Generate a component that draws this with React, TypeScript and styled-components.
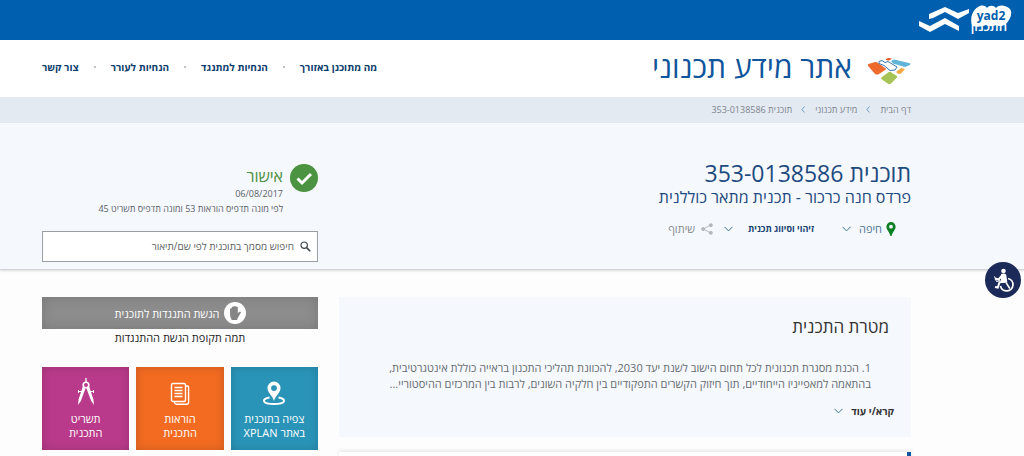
import React from "react";
import styled, { createGlobalStyle } from "styled-components";

const GlobalStyle = createGlobalStyle`
  *, *::before, *::after { box-sizing: border-box; }
  body {
    margin: 0;
    background: #fdfdfd;
    color: #333;
    font-family: "Open Sans", "Noto Sans", sans-serif;
    font-size: 11px;
  }
  h1, h2, h3, p, ul, ol { margin: 0; padding: 0; font-weight: 400; }
  ul, ol { list-style: none; }
  a { color: inherit; text-decoration: none; }
  button { font: inherit; color: inherit; border: 0; padding: 0; background: none; cursor: pointer; }
`;

const Page = styled.div`
  display: flex;
  flex-direction: column;
  min-height: 100vh;
`;

const gutter = "113px";
const gutterEnd = "42px";

const TopBar = styled.div`
  display: flex;
  align-items: center;
  height: 40px;
  padding-right: 12px;
  background: #005fae;
`;

const Header = styled.header`
  display: flex;
  align-items: center;
  justify-content: space-between;
  height: 57px;
  padding: 0 ${gutter} 3px ${gutterEnd};
  background: #fff;
`;

const Brand = styled.a`
  display: flex;
  align-items: flex-end;
  gap: 15px;
  color: #11559c;
  font-size: 30px;
  line-height: 36px;
`;

const NavList = styled.ul`
  display: flex;
  align-items: center;
  color: #0c3c6c;
  font-size: 10px;
  line-height: 16px;
  font-weight: 700;
`;

const NavItem = styled.li`
  display: flex;
  align-items: center;
  & + &::before {
    content: "";
    width: 2px;
    height: 2px;
    margin: 0 15px;
    border-radius: 50%;
    background: #a9b0b8;
  }
`;

const Crumbs = styled.ol`
  display: flex;
  align-items: center;
  gap: 10px;
  height: 26px;
  padding: 0 ${gutter} 2px ${gutterEnd};
  background: #e3eaf2;
  color: #7d858d;
  font-size: 9px;
`;

const Crumb = styled.li`
  display: flex;
  align-items: center;
  gap: 9px;
`;

const Hero = styled.section`
  display: flex;
  justify-content: space-between;
  align-items: flex-start;
  padding: 36px ${gutter} 7px ${gutterEnd};
  background: #f5f8fc;
  border-bottom: 1px solid #d0d4d8;
  box-shadow: 0 1px 2px rgba(0, 0, 0, 0.14);
`;

const PlanTitle = styled.h1`
  color: #1d4a80;
  font-size: 23px;
  line-height: 28px;
`;

const PlanSubtitle = styled.h2`
  color: #1d4a80;
  font-size: 16px;
  line-height: 20px;
`;

const Actions = styled.div`
  display: flex;
  align-items: center;
  padding: 14px 15px 0 0;
`;

const Action = styled.button<{ $tone: string; $size: number; $bold?: boolean; $gap: number; $after?: number }>`
  display: flex;
  align-items: center;
  gap: ${(p) => p.$gap}px;
  margin-left: ${(p) => p.$after ?? 0}px;
  color: ${(p) => p.$tone};
  font-size: ${(p) => p.$size}px;
  font-weight: ${(p) => (p.$bold ? 700 : 400)};
  line-height: 16px;
`;

const Label = styled.span`
  display: flex;
  align-items: center;
  gap: 4px;
`;

const Side = styled.div`
  width: 276px;
  flex: none;
`;

const Status = styled.div`
  display: flex;
  align-items: flex-start;
  gap: 7px;
  padding-top: 5px;
`;

const StatusName = styled.p`
  color: #4d8f43;
  font-size: 16px;
  line-height: 24px;
`;

const StatusLine = styled.p<{ $first?: boolean }>`
  color: #5b6167;
  font-size: 9px;
  line-height: ${(p) => (p.$first ? 12 : 18)}px;
`;

const Search = styled.label`
  display: flex;
  align-items: center;
  gap: 6px;
  height: 31px;
  margin-top: 13px;
  padding: 0 6px 1px;
  border: 1px solid #9a9ea2;
  background: #fff;
`;

const SearchInput = styled.input`
  flex: 1;
  min-width: 0;
  border: 0;
  padding: 0;
  outline: 0;
  background: none;
  font: 10px/16px "Open Sans", "Noto Sans", sans-serif;
  &::placeholder { color: #5c5f62; opacity: 1; }
`;

const Main = styled.main`
  display: flex;
  flex: 1;
  gap: 21px;
  padding: 27px ${gutter} 0 ${gutterEnd};
`;

const Column = styled.div`
  display: flex;
  flex: 1;
  min-width: 0;
  flex-direction: column;
  gap: 15px;
`;

const Card = styled.section`
  min-height: 140px;
  padding: 18px 17px 0 24px;
  background: #f5f8fc;
`;

const CardTitle = styled.h3`
  padding-right: 5px;
  font-size: 17px;
  line-height: 24px;
`;

const CardText = styled.p`
  padding: 21px 23px 0 0;
  color: #666c72;
  font-size: 11px;
  line-height: 16px;
`;

const Line = styled.span`
  display: block;
`;

const More = styled.button`
  display: flex;
  align-items: center;
  gap: 8px;
  margin-top: 10px;
  font-size: 10px;
  font-weight: 700;
  line-height: 18px;
`;

const NextCard = styled.section`
  flex: 1;
  border-right: 4px solid #11559c;
  background: #fff;
  box-shadow: 0 -1px 4px rgba(0, 0, 0, 0.12);
`;

const Objection = styled.button`
  display: flex;
  align-items: center;
  justify-content: center;
  gap: 4px;
  width: 100%;
  height: 32px;
  background: #8c8c8c;
  box-shadow: inset 0 0 12px rgba(0, 0, 0, 0.14);
  color: #fff;
`;

const Note = styled.p`
  color: #222;
  line-height: 18px;
  text-align: center;
`;

const Tiles = styled.div`
  display: grid;
  grid-template-columns: repeat(3, 1fr);
  gap: 7px;
  margin-top: 20px;
`;

const Tile = styled.a<{ $color: string }>`
  display: flex;
  flex-direction: column;
  align-items: center;
  height: 83px;
  padding-top: 9px;
  gap: 2px;
  background: ${(p) => p.$color};
  box-shadow: inset 0 0 10px rgba(0, 0, 0, 0.16);
  color: #fff;
  line-height: 14px;
  text-align: center;
`;

const Access = styled.button`
  position: fixed;
  top: 262px;
  right: 3px;
  width: 36px;
  height: 36px;
  border-radius: 50%;
  background: #1b2a58;
`;

const Chevron = ({ color = "#3f7396" }: { color?: string }) => (
  <svg width="9" height="6" viewBox="0 0 9 6" fill="none" stroke={color} aria-hidden="true">
    <path d="M.5 .8 4.5 4.9 8.5 .8" />
  </svg>
);

const CrumbArrow = () => (
  <svg width="4" height="7" viewBox="0 0 4 7" fill="none" stroke="#6e9cc0" aria-hidden="true">
    <path d="M3.6 .5 .8 3.5 3.6 6.5" />
  </svg>
);

const PartnerLogo = () => (
  <svg width="94" height="32" viewBox="918 4 94 32" aria-label="yad2">
    <g fill="#fff">
      <path d="M929 14 945 7 958 13 969 9V13L958 19 945 12 933 18 929 19Z" />
      <path d="M919 21 930 26 945 18 959 26V31L945 24 930 32 919 26Z" />
      <path d="M973 26C969 21 972 10 978 7 982 4 986 6 987 8 989 5 994 5 996 8 999 4 1006 5 1010 9 1013 13 1010 20 1006 24 1002 27 998 26 996 25 992 27 988 26 986 25 981 27 977 27 973 26Z" />
    </g>
    <text x="991" y="20" textAnchor="middle" fill="#005fae" fontFamily="Open Sans, sans-serif" fontSize="12" fontWeight="700" direction="ltr">yad2</text>
    <text x="989" y="31" textAnchor="middle" fill="#fff" fontFamily="Open Sans, sans-serif" fontSize="13" fontWeight="600">התכנון</text>
  </svg>
);

const SiteLogo = () => (
  <svg width="44" height="28" viewBox="0 0 44 28" aria-hidden="true">
    <path d="M1.5 7 8 5Q10 5 11 6L18 11Q20 12 18 13L12 17Q10 18 8 17L2 10Q0 8 1.5 7Z" fill="#ee6b2d" />
    <path d="M18.5 2.500Q20 0 25 1.500L23 3Q21 4 18.5 2.500Z" fill="#e2532a" />
    <path d="M24 4 27 2.500 42 6Q44 6 43 8L38 10 26 6.500Z" fill="#62b3d8" />
    <path d="M34 11 38 12 34 16.500Q32 18 29 15Z" fill="#f3a841" />
    <path d="M15 20 21 15.500Q23 14 25 16L30 19Q31 20 29 21.500L24 26.500Q22 28 20 26L15 22.500Q13 21 15 20Z" fill="#a6c455" />
    <path d="M12 4.500 15 3.500 18 5.500 21 4.500 30 10 28 13 23 13.500 17 8.500 12 6.500Z" fill="#fff" stroke="#3a76b5" strokeWidth="1" />
  </svg>
);

const PinIcon = () => (
  <svg width="10" height="14" viewBox="0 0 10 14" aria-hidden="true">
    <path fillRule="evenodd" d="M5 0A4.6 4.6 0 0 0 .4 4.7C.4 8 3.5 9.5 4.4 14H5.6C6.5 9.5 9.6 8 9.6 4.7A4.6 4.6 0 0 0 5 0ZM5 2.8A1.9 1.9 0 1 1 5 6.6 1.9 1.9 0 0 1 5 2.8Z" fill="#0d8024" />
  </svg>
);

const ShareIcon = () => (
  <svg width="12" height="12" viewBox="0 0 12 12" fill="#b4b8bc" stroke="#b4b8bc" aria-hidden="true">
    <path d="M9.5 2 2.5 6 9.5 10" fill="none" />
    <circle cx="9.8" cy="2.2" r="1.5" />
    <circle cx="2.2" cy="6" r="1.5" />
    <circle cx="9.8" cy="9.8" r="1.5" />
  </svg>
);

const CheckIcon = () => (
  <svg width="28" height="28" viewBox="0 0 28 28" aria-hidden="true">
    <circle cx="14" cy="14" r="14" fill="#4b9340" />
    <path d="M7.5 14.5 12 19 21 10" fill="none" stroke="#fff" strokeWidth="3" />
  </svg>
);

const SearchIcon = () => (
  <svg width="11" height="11" viewBox="0 0 11 11" fill="none" stroke="#3f4449" aria-hidden="true">
    <circle cx="4.2" cy="4.2" r="3.2" strokeWidth="1.2" />
    <path d="M6.6 6.6 10.2 10.2" strokeWidth="1.6" />
  </svg>
);

const HandIcon = () => (
  <svg width="22" height="22" viewBox="0 0 22 22" aria-hidden="true">
    <circle cx="11" cy="11" r="11" fill="#fff" />
    <path d="M6 7Q6.8 5.6 7.8 6.5V5Q8.8 3.9 9.8 4.8 10.8 3 12 4.8 13.4 4.2 13.8 5.6V11L15.7 9.8Q17.3 9.3 16.8 10.8L13.8 16 13 18H7.8L6.2 14.5Z" fill="#858585" />
  </svg>
);

const MapPinIcon = () => (
  <svg width="24" height="34" viewBox="0 0 24 34" fill="none" stroke="#fff" aria-hidden="true">
    <path d="M7.5 21.5C-1 23 0 28 12 28S25 23 16.5 21.5" strokeWidth="2" />
    <path fill="#fff" stroke="none" fillRule="evenodd" d="M12 5.5A6.5 6.5 0 0 0 5.5 12C5.5 16.5 10.5 19.5 12 25 13.5 19.5 18.5 16.5 18.5 12A6.5 6.5 0 0 0 12 5.5ZM12 9.2A2.9 2.9 0 1 1 12 15 2.9 2.9 0 0 1 12 9.2Z" />
  </svg>
);

const PagesIcon = () => (
  <svg width="20" height="34" viewBox="0 0 20 34" fill="none" stroke="#fff" strokeWidth="1.4" aria-hidden="true">
    <rect x="1.5" y="7.5" width="14" height="18" rx="1.5" />
    <path d="M16 10H17.2Q18.6 10 18.6 11.5V26.5Q18.6 28.2 17 28.2H6Q4.7 28.2 4.5 26M4.5 11.5H12.5M4.5 14.5H12.5M4.5 17.5H12.5M4.5 20.5H12.5" />
  </svg>
);

const CompassIcon = () => (
  <svg width="18" height="34" viewBox="0 0 18 34" fill="none" stroke="#fff" aria-hidden="true">
    <path d="M9 2V6" strokeWidth="1.3" />
    <circle cx="9" cy="9" r="2.8" strokeWidth="1.6" />
    <path d="M5.8 10.5 8.5 12.5 3.8 25 1 29 1.6 23.5Z" fill="#fff" stroke="none" />
    <path d="M12.2 10.5 9.5 12.5 14.2 25 17 29 16.4 23.5Z" fill="#fff" stroke="none" />
    <path d="M1 15.5H5M13 15.5H17M1.5 14V17M16.5 14V17" />
  </svg>
);

const WheelchairIcon = () => (
  <svg width="36" height="36" viewBox="0 0 36 36" fill="none" stroke="#fff" aria-hidden="true">
    <circle cx="18.5" cy="9" r="2.3" fill="#fff" stroke="none" />
    <path d="M16 12.2Q19 10.6 21.2 12.6L22.3 20.5 16 20.5Z" fill="#fff" stroke="none" />
    <path d="M17 13.5 13.7 17.5 10 16.5M20.5 19.8 14.5 20.2 12.8 25.5 10 25" strokeWidth="2" />
    <path d="M9.5 14.5 11.5 19.5 15.5 18.5" strokeWidth="1" />
    <path d="M23 16.5A6.3 6.3 0 1 1 15.5 24" strokeWidth="1.7" />
    <path d="M21 20.5 24.8 26.5" strokeWidth="1.5" />
  </svg>
);

const navLinks = ["מה מתוכנן באזורך", "הנחיות למתנגד", "הנחיות לעורר", "צור קשר"];
const crumbs = ["דף הבית", "מידע תכנוני", "תוכנית 353-0138586"];
const tiles = [
  { color: "#2a94b8", icon: <MapPinIcon />, lines: ["צפיה בתוכנית", "באתר XPLAN"] },
  { color: "#f26b21", icon: <PagesIcon />, lines: ["הוראות", "התכנית"] },
  { color: "#b93a8a", icon: <CompassIcon />, lines: ["תשריט", "התכנית"] },
];

export default function App() {
  return (
    <Page dir="rtl" lang="he">
      <GlobalStyle />
      <TopBar>
        <PartnerLogo />
      </TopBar>
      <Header>
        <Brand href="#">
          <SiteLogo />
          <span>אתר מידע תכנוני</span>
        </Brand>
        <nav>
          <NavList>
            {navLinks.map((text) => (
              <NavItem key={text}>
                <a href="#">{text}</a>
              </NavItem>
            ))}
          </NavList>
        </nav>
      </Header>
      <Crumbs>
        {crumbs.map((text, i) => (
          <Crumb key={text}>
            {i > 0 && <CrumbArrow />}
            <a href="#">{text}</a>
          </Crumb>
        ))}
      </Crumbs>
      <Hero>
        <div>
          <PlanTitle>תוכנית 353-0138586</PlanTitle>
          <PlanSubtitle>פרדס חנה כרכור - תכנית מתאר כוללנית</PlanSubtitle>
          <Actions>
            <Action $tone="#4c7396" $size={11} $gap={8} $after={28}>
              <Label>
                <PinIcon />
                חיפה
              </Label>
              <Chevron />
            </Action>
            <Action $tone="#174374" $size={9} $bold $gap={15} $after={11}>
              זיהוי וסיווג תכנית
              <Chevron />
            </Action>
            <Action $tone="#85898d" $size={11} $gap={6}>
              <ShareIcon />
              שיתוף
            </Action>
          </Actions>
        </div>
        <Side>
          <Status>
            <CheckIcon />
            <div>
              <StatusName>אישור</StatusName>
              <StatusLine $first>06/08/2017</StatusLine>
              <StatusLine>לפי מונה תדפיס הוראות 53 ומונה תדפיס תשריט 45</StatusLine>
            </div>
          </Status>
          <Search>
            <SearchIcon />
            <SearchInput type="text" placeholder="חיפוש מסמך בתוכנית לפי שם/תיאור" aria-label="חיפוש מסמך" />
          </Search>
        </Side>
      </Hero>
      <Main>
        <Column>
          <Card>
            <CardTitle>מטרת התכנית</CardTitle>
            <CardText>
              <Line>1. הכנת מסגרת תכנונית לכל תחום הישוב לשנת יעד 2030, להכוונת תהליכי התכנון בראייה כוללת אינטגרטיבית,</Line>
              <Line>בהתאמה למאפייניו הייחודיים, תוך חיזוק הקשרים התפקודיים בין חלקיה השונים, לרבות בין המרכזים ההיסטוריי...</Line>
            </CardText>
            <More>
              קרא/י עוד
              <Chevron />
            </More>
          </Card>
          <NextCard />
        </Column>
        <Side>
          <Objection>
            <HandIcon />
            הגשת התנגדות לתוכנית
          </Objection>
          <Note>תמה תקופת הגשת ההתנגדות</Note>
          <Tiles>
            {tiles.map((tile) => (
              <Tile key={tile.color} href="#" $color={tile.color}>
                {tile.icon}
                <span>
                  {tile.lines.map((line) => (
                    <Line key={line}>{line}</Line>
                  ))}
                </span>
              </Tile>
            ))}
          </Tiles>
        </Side>
      </Main>
      <Access aria-label="נגישות">
        <WheelchairIcon />
      </Access>
    </Page>
  );
}
